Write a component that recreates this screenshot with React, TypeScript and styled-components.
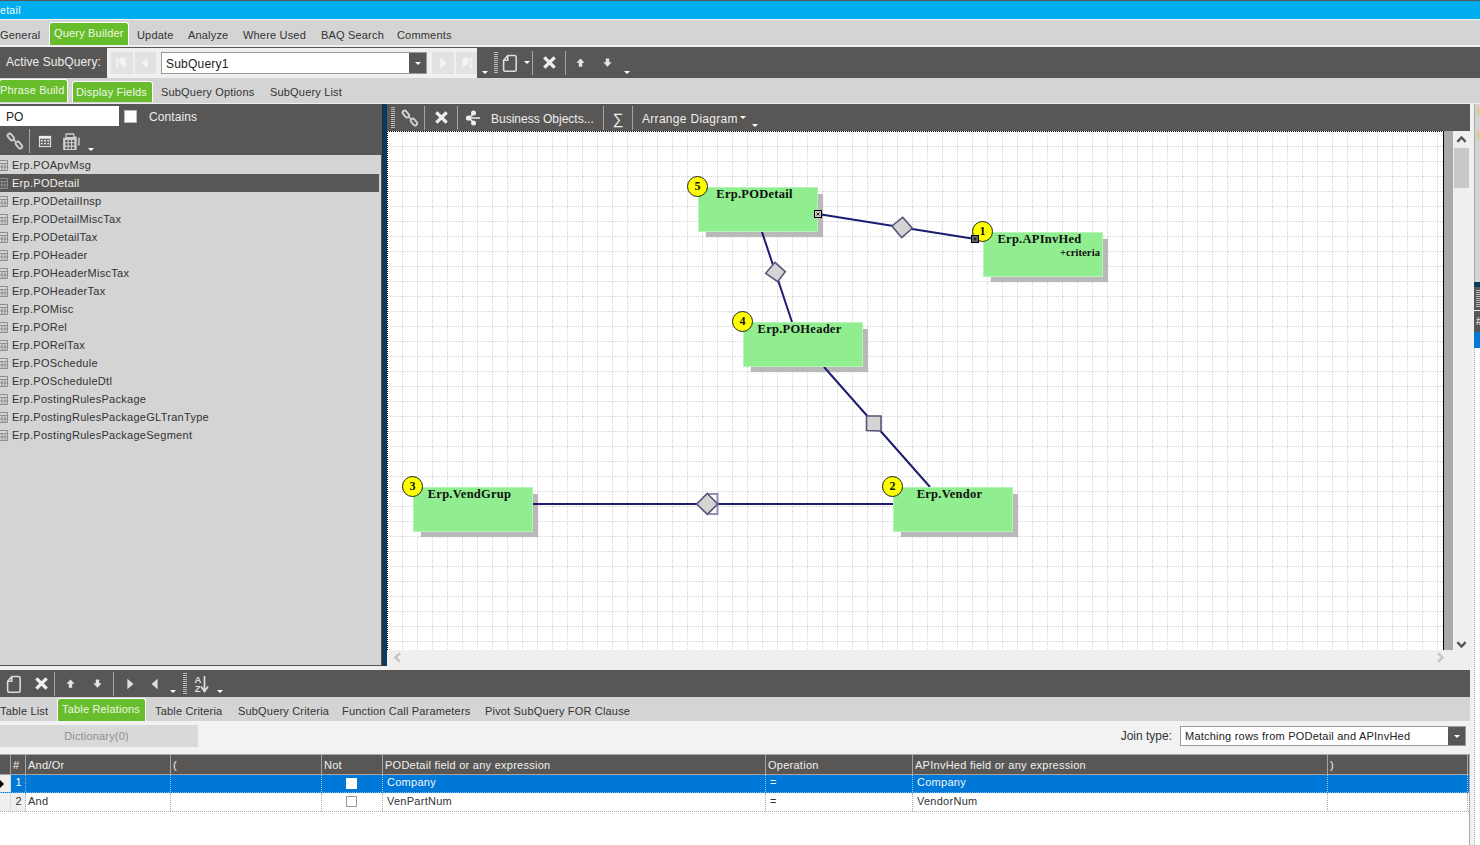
import React from "react";
import styled, { createGlobalStyle } from "styled-components";

const Global = createGlobalStyle`
  html, body { margin: 0; padding: 0; background: #f0f0f0; }
  * { box-sizing: border-box; }
`;

const UI = `"Liberation Sans", Arial, sans-serif`;
const DARK = "#595755";
const GREEN = "#67bd2b";

const Page = styled.div`
  width: 1480px; height: 845px; overflow: hidden; display: flex; flex-direction: column;
  font-family: ${UI}; font-size: 11px; letter-spacing: .18px; color: #333; background: #f0f0f0;
`;
const TopLine = styled.div`height: 1px; background: #555;`;
const TitleBar = styled.div`
  height: 18px; background: #00adef; color: #f2fbff; line-height: 18px; font-size: 10.5px; letter-spacing: .3px;
  margin-bottom: 1px;
`;
const TabRow = styled.div<{ $h: number; $after?: number; $pb?: number }>`
  height: ${p => p.$h}px; margin-bottom: ${p => p.$after ?? 0}px; padding-bottom: ${p => p.$pb ?? 0}px;
  background: #d4d4d4; display: flex; align-items: flex-end; flex: none;
`;
const Tab = styled.div<{ $w: number; $kind?: "raised" | "flat"; $pad?: number; $gap?: number; $ml?: number }>`
  width: ${p => p.$w}px; flex: none; white-space: nowrap; line-height: 20px;
  margin-right: ${p => p.$gap ?? 0}px;
  margin-left: ${p => p.$ml ?? 0}px;
  padding-left: ${p => p.$pad ?? 0}px;
  height: ${p => (p.$kind === "raised" ? 23 : p.$kind === "flat" ? 21 : 20)}px;
  ${p => p.$kind ? `background: ${GREEN}; color: #eef8e4; border: 1px solid #fff; border-bottom: 0; border-radius: 3px 3px 0 0;` : ""}
`;
const Toolbar = styled.div<{ $h: number }>`
  height: ${p => p.$h}px; flex: none; background: ${DARK}; display: flex; align-items: center; color: #eee;
`;
const ToolText = styled.div<{ $w: number; $pad?: number; $sp: number }>`
  width: ${p => p.$w}px; flex: none; white-space: nowrap; font-size: 12px; padding-left: ${p => p.$pad ?? 0}px;
  letter-spacing: ${p => p.$sp}px; padding-top: 2px;
`;
const Sigma = styled.div`
  width: 28px; flex: none; text-align: center; font-size: 15px; letter-spacing: 0; padding-top: 1px;
`;
const BarLabel = styled.div`
  width: 107px; padding-left: 6px; font-size: 12px; letter-spacing: .1px; margin-top: -1px; white-space: nowrap;
`;
const LightSection = styled.div`
  align-self: flex-end; height: 30px; width: 370px; background: #f0f0f0; display: flex; align-items: center; padding: 0 0 0 4px; gap: 2px;
`;
const NavBtn = styled.div`
  width: 22px; height: 22px; background: #e2e2e2; display: flex; align-items: center; justify-content: center; margin-top: 0;
`;
const Combo = styled.div<{ $w: number; $h?: number; $size?: number }>`
  width: ${p => p.$w}px; height: ${p => p.$h ?? 22}px; background: #fff; border: 1px solid #999; display: flex; align-items: stretch; flex: none;
  color: #222; font-size: ${p => p.$size ?? 12}px;
`;
const ComboText = styled.div<{ $pt?: number }>`
  flex: 1; padding: ${p => p.$pt ?? 1}px 0 0 4px; display: flex; align-items: center; white-space: nowrap; letter-spacing: .22px;
`;
const ComboBtn = styled.div`width: 17px; background: ${DARK}; display: flex; align-items: center; justify-content: center;`;
const Caret = styled.span`
  display: inline-block; width: 0; height: 0; border-left: 3px solid transparent; border-right: 3px solid transparent; border-top: 3px solid #fff;
`;
const Slot = styled.div<{ $w: number; $align?: "end" }>`
  width: ${p => p.$w}px; flex: none; height: 100%; display: flex; align-items: ${p => (p.$align === "end" ? "flex-end" : "center")}; justify-content: center;
  padding-bottom: ${p => (p.$align === "end" ? 4 : 0)}px;
  gap: 5px;
`;
const Sep = styled.div`width: 1px; height: 24px; background: #a8a6a4; flex: none;`;
const Grip = styled.div`
  width: 4px; height: 22px; flex: none; margin: 0 1px;
  background: repeating-linear-gradient(to bottom, #bdbbb9 0 1px, transparent 1px 2px);
`;

const Split = styled.div`flex: 1; display: flex; min-height: 0;`;
const MainCol = styled.div`width: 1470px; flex: none; display: flex; flex-direction: column; background: #fff;`;
const Upper = styled.div`height: 566px; flex: none; display: flex; background: #efefef;`;
const Left = styled.div`
  width: 382px; height: 562px; flex: none; display: flex; flex-direction: column; background: #d4d4d4;
  border-right: 1px solid #555; border-bottom: 1px solid #555;
`;
const LeftHead = styled.div`height: 51px; background: ${DARK}; flex: none; display: flex; flex-direction: column; color: #eee;`;
const FilterRow = styled.div`height: 23px; display: flex; align-items: flex-start; padding-top: 2px; flex: none;`;
const FilterInput = styled.div`
  width: 119px; height: 20px; background: #fff; color: #222; font-size: 12px; line-height: 22px; padding-left: 6px; letter-spacing: 0;
`;
const Check = styled.div<{ $light?: boolean }>`
  width: 11px; height: 11px; flex: none; background: #fff; border: 1px solid ${p => (p.$light ? "#fff" : "#9a9a9a")};
`;
const FilterCheck = styled(Check)`width: 13px; height: 13px; margin: 4px 12px 0 5px; border: 1px solid #bbb;`;
const FilterLabel = styled.div`font-size: 12px; line-height: 22px; letter-spacing: .1px;`;
const IconRow = styled.div`flex: 1; display: flex; align-items: center;`;
const List = styled.div`flex: 1; padding: 1px 2px 0 0; overflow: hidden; letter-spacing: .28px;`;
const ListRow = styled.div<{ $sel?: boolean }>`
  height: 18px; display: flex; align-items: center; gap: 4px;
  background: ${p => (p.$sel ? DARK : "transparent")}; color: ${p => (p.$sel ? "#f0f0f0" : "#333")};
`;
const Splitter = styled.div`
  width: 5px; height: 562px; flex: none; background: #0b3a5c; border-left: 1px solid #22303a;
`;
const RightCol = styled.div`flex: 1; display: flex; flex-direction: column; min-width: 0;`;
const CanvasRow = styled.div`height: 519px; flex: none; display: flex;`;
const Canvas = styled.div`
  position: relative; width: 1057px; flex: none; overflow: hidden; background: #fff;
  border-left: 1px dotted #000; border-top: 1px dotted #000; border-right: 1px solid #000;
`;
const Layer = styled.svg`position: absolute; left: 0; top: 0; width: 1055px; height: 518px; display: block;`;
const NodeShadow = styled.div<{ $x: number; $y: number }>`
  position: absolute; left: ${p => p.$x - 388 + 8}px; top: ${p => p.$y - 132 + 7}px; width: 117px; height: 43px;
  background: #b9b9b9; box-shadow: 0 0 1px #c8c8c8;
`;
const Node = styled.div<{ $x: number; $y: number }>`
  position: absolute; left: ${p => p.$x - 388}px; top: ${p => p.$y - 132}px; width: 120px; height: 45px;
  background: #90ee90; border: 1px solid #b4f4b4;
  font-family: "Liberation Serif", "Times New Roman", serif; font-weight: 700; font-size: 12.5px; color: #111; letter-spacing: .25px;
  padding-right: 7px; text-align: center; line-height: 13px;
`;
const NodeTitle = styled.div`white-space: nowrap;`;
const NodeNote = styled.div`font-size: 10.5px; line-height: 14px; text-align: right; margin: 0 -5px 0 0; letter-spacing: .1px;`;
const Badge = styled.div`
  position: absolute; left: -12px; top: -12px; width: 21px; height: 21px; border-radius: 50%;
  background: #ff0; border: 1px solid #222; font-size: 12px; line-height: 18px; text-align: center; letter-spacing: 0; padding: 0;
`;
const GreyBand = styled.div`width: 9px; flex: none; background: #a9a9a9;`;
const VScroll = styled.div`
  flex: 1; background: #efefef; display: flex; flex-direction: column; align-items: center; padding-top: 3px;
`;
const VThumb = styled.div`width: 15px; height: 40px; background: #c9c9c9; margin-top: 3px;`;
const VSpace = styled.div`flex: 1;`;
const HScroll = styled.div`
  height: 20px; flex: none; background: #efefef; display: flex; align-items: flex-start; justify-content: space-between; padding: 2px 24px 0 5px;
`;
const JoinPanel = styled.div`
  height: 33px; flex: none; background: #f2f2f4; display: flex; align-items: center; padding: 0 4px 3px 0;
`;
const Dict = styled.div`
  width: 198px; height: 22px; background: #d9d9d9; color: #8f8f8f; display: flex; align-items: center; justify-content: center; margin-right: auto; padding-right: 5px;
`;
const JoinLabel = styled.div`color: #333; font-size: 12px; letter-spacing: 0; margin-right: 8px;`;
const GridWrap = styled.div`flex: 1; background: #fff; border-right: 1px solid #aaa; display: flex; flex-direction: column; letter-spacing: .26px;`;
const COLS = "11px 15px 145px 151px 61px 383px 147px 415px 140px";
const HeadRow = styled.div`
  height: 21px; display: grid; grid-template-columns: ${COLS}; background: ${DARK}; color: #f0f0f0;
  border-top: 1px solid #a5a5a5; border-bottom: 1px solid #a5a5a5; flex: none;
`;
const HeadCell = styled.div`
  border-right: 1px solid #a5a5a5; padding-left: 2px; line-height: 20px; white-space: nowrap; overflow: hidden;
`;
const DataRow = styled.div<{ $sel?: boolean }>`
  height: ${p => (p.$sel ? 18 : 19)}px; display: grid; grid-template-columns: ${COLS}; flex: none;
  line-height: ${p => (p.$sel ? 15 : 16)}px;
  background: ${p => (p.$sel ? "#0078d7" : "#fff")}; color: ${p => (p.$sel ? "#f2f7fc" : "#333")};
  border-bottom: 1px dotted ${p => (p.$sel ? "#7ab4e6" : "#aaa")};
`;
const Cell = styled.div<{ $pad?: number; $sel?: boolean }>`
  border-right: 1px dotted ${p => (p.$sel ? "#9ccaf0" : "#aaa")}; padding-left: ${p => p.$pad ?? 2}px; white-space: nowrap; position: relative;
`;
const RowHead = styled.div`background: #efefef; display: flex; align-items: center; border-right: 1px solid #ddd;`;
const Triangle = styled.span`width: 0; height: 0; border-left: 4px solid #000; border-top: 4px solid transparent; border-bottom: 4px solid transparent;`;
const NumCell = styled.div<{ $sel?: boolean }>`
  text-align: right; padding-right: 3px; background: ${p => (p.$sel ? "#0078d7" : "#efefef")}; border-right: 1px dotted #aaa;
`;
const CheckCell = styled(Cell)`display: flex; justify-content: center; align-items: center; padding: 0 1px 1px 0;`;
const Strip = styled.div`
  width: 6px; margin-left: 4px; flex: none; display: flex; flex-direction: column;
`;
const StripTop = styled.div`height: 178px; background: #d4d4d4; border-left: 1px solid #aaa; padding-top: 3px;`;
const StripMark = styled.div`width: 4px; height: 8px; background: #d8c9a0; margin: 0 0 16px 1px;`;
const StripNavy = styled.div`height: 5px; background: #0b3a5c;`;
const StripDark = styled.div`height: 23px; background: ${DARK}; padding: 3px 0 0 2px;`;
const StripGrip = styled.div`height: 17px; background: repeating-linear-gradient(to bottom, #bbb 0 1px, transparent 1px 2px);`;
const StripHead = styled.div`height: 21px; margin-top: 1px; background: ${DARK}; color: #fff; font-size: 11px; line-height: 20px; padding-left: 2px; overflow: hidden;`;
const StripBlue = styled.div`height: 16px; background: #0078d7;`;
const StripRest = styled.div`flex: 1; border-left: 1px dotted #aaa; background: #fff;`;

const Svg: React.FC<React.SVGProps<SVGSVGElement> & { s?: number }> = ({ s = 16, children, ...r }) => (
  <svg width={s} height={s} viewBox="0 0 16 16" {...r}>{children}</svg>
);
const LinkI = () => (
  <Svg s={18}>
    <g fill="none" stroke="#cfcfcf" strokeWidth="1.7">
      <rect x="0.9" y="2.6" width="6.8" height="3.6" rx="1.8" transform="rotate(50 4.3 4.4)" />
      <rect x="8.1" y="9.8" width="6.8" height="3.6" rx="1.8" transform="rotate(50 11.5 11.6)" />
      <path d="M6.6 6.8 L9.2 9.2" strokeWidth="1.3" />
    </g>
  </Svg>
);
const XI = () => (
  <Svg s={15}><path d="M2.5 2.5 L13.5 13.5 M13.5 2.5 L2.5 13.5" stroke="#eee" strokeWidth="3.6" fill="none" /></Svg>
);
const Up = ({ down }: { down?: boolean }) => (
  <Svg s={11} transform={down ? "rotate(180)" : undefined}><path d="M8 2 L14 8.5 H10.5 V14 H5.5 V8.5 H2 Z" fill="#e4e4e4" /></Svg>
);
const DocI = () => (
  <Svg s={18}><path d="M6.5 1.5 H13 a1.5 1.5 0 0 1 1.5 1.5 V15 a1.5 1.5 0 0 1 -1.5 1.5 H4 a1.5 1.5 0 0 1 -1.5 -1.5 V6 Z M6.5 1.5 V6 H2.5" transform="scale(.93)" fill="none" stroke="#dcdcdc" strokeWidth="1.5" /></Svg>
);
const TreeI = () => (
  <Svg s={16}>
    <path d="M4 8 L9 3 M4 8 L9 13 M4 8 H15" stroke="#eee" strokeWidth="1.6" fill="none" />
    <circle cx="3.5" cy="8" r="2.6" fill="#eee" /><circle cx="8.5" cy="3" r="2.5" fill="#eee" /><circle cx="8.5" cy="13" r="2.5" fill="#eee" />
  </Svg>
);
const CalI = () => (
  <Svg s={15}>
    <rect x="1" y="2" width="13" height="12" fill="#eee" />
    <rect x="2" y="5" width="11" height="8" fill="#666" />
    <path d="M3 6.5 h2 v1.5 h-2z M6.5 6.5 h2 v1.5 h-2z M10 6.5 h2 v1.5 h-2z M3 9.5 h2 v1.5 h-2z M6.5 9.5 h2 v1.5 h-2z M10 9.5 h2 v1.5 h-2z" fill="#eee" />
  </Svg>
);
const CalcI = () => (
  <Svg s={18}>
    <path d="M3 1 H11 V4 H13 V16 H1 V5 H3 Z" fill="#cfcfcf" />
    <path d="M14 5 H16 V12 H14 Z" fill="#aaa" />
    <path d="M3 7 h2 v2 h-2z M6 7 h2 v2 h-2z M9 7 h2 v2 h-2z M3 10 h2 v2 h-2z M6 10 h2 v2 h-2z M9 10 h2 v2 h-2z M3 13 h2 v2 h-2z M6 13 h2 v2 h-2z M9 13 h2 v2 h-2z M4 2.5 h6 v2 h-6z" fill="#595755" />
  </Svg>
);
const Tri = ({ dir, c = "#f4f4f4", bar }: { dir: "l" | "r"; c?: string; bar?: boolean }) => (
  <Svg s={14} transform={dir === "r" ? "scale(-1 1)" : undefined}>
    <path d={bar ? "M5 2 L12 2 L12 14 L5 8 Z" : "M11 2 V14 L4 8 Z"} fill={c} />
    {bar && <rect x="1.5" y="2" width="2" height="12" fill={c} />}
  </Svg>
);
const SortI = () => (
  <Svg s={20} viewBox="0 0 20 20">
    <text x="4.5" y="9" fontFamily="Liberation Sans" fontWeight="700" fontSize="9.5" fill="#ddd" letterSpacing="0">A</text>
    <text x="4.8" y="18" fontFamily="Liberation Sans" fontWeight="700" fontSize="9.5" fill="#ddd" letterSpacing="0">Z</text>
    <path d="M14.5 2 V17 M11 12.5 L14.5 17.5 L18 12.5" stroke="#ddd" strokeWidth="1.7" fill="none" />
  </Svg>
);
const Chev = ({ rot, c = "#555", s = 11 }: { rot: number; c?: string; s?: number }) => (
  <Svg s={s} transform={`rotate(${rot})`}><path d="M2 11.5 L8 5 L14 11.5" fill="none" stroke={c} strokeWidth="3.4" /></Svg>
);
const TableI = () => (
  <svg width="8" height="11" viewBox="0 0 8 11">
    <path d="M-1 .5 H7.5 V10.5 H-1 M-1 3.5 H7.5 M-1 7 H7.5 M2 3.5 V10.5 M5 3.5 V10.5" fill="none" stroke="#8d8d8d" />
  </svg>
);
const SmallCaret = () => <Caret />;

const Handle = ({ x, y, dark }: { x: number; y: number; dark?: boolean }) => (
  <g transform={`translate(${x - 388 - 4} ${y - 132 - 4})`}>
    <rect x=".5" y=".5" width="7" height="7" fill={dark ? "#666" : "#ccc"} stroke="#000" />
    {dark
      ? <path d="M2.5 4 H5.5 M4 2.5 V5.5" stroke="#111" strokeWidth="1" />
      : <path d="M2.5 2.5 L5.5 5.5 M5.5 2.5 L2.5 5.5" stroke="#222" strokeWidth="1" />}
  </g>
);

const lists = ["POApvMsg","PODetail","PODetailInsp","PODetailMiscTax","PODetailTax","POHeader","POHeaderMiscTax","POHeaderTax","POMisc","PORel","PORelTax","POSchedule","POScheduleDtl","PostingRulesPackage","PostingRulesPackageGLTranType","PostingRulesPackageSegment"];

const ox = (x: number) => x - 388;
const oy = (y: number) => y - 132;
const pts = (a: number[][]) => a.map(([x, y]) => `${ox(x)},${oy(y)}`).join(" ");

const nodes = [
  { n: 5, x: 698, y: 187, t: "Erp.PODetail" },
  { n: 1, x: 983, y: 232, t: "Erp.APInvHed", note: "+criteria" },
  { n: 4, x: 743, y: 322, t: "Erp.POHeader" },
  { n: 3, x: 413, y: 487, t: "Erp.VendGrup" },
  { n: 2, x: 893, y: 487, t: "Erp.Vendor" },
];

const Diagram = () => (
  <Canvas>
    <Layer>
      <defs>
        <pattern id="grid" width="15" height="15" patternUnits="userSpaceOnUse">
          <path d="M14.5 0 V15 M0 14.5 H15" stroke="#d4d4d4" strokeWidth="1" strokeDasharray="1 1" fill="none" />
        </pattern>
      </defs>
      <rect width="1055" height="518" fill="url(#grid)" />
    </Layer>
    {nodes.map(n => <NodeShadow key={n.n} $x={n.x} $y={n.y} />)}
    <Layer>
      <g stroke="#1c1c72" strokeWidth="2" fill="none">
        <polyline points={pts([[818, 214], [975, 239]])} />
        <polyline points={pts([[762, 232], [792, 322]])} />
        <polyline points={pts([[824, 367], [930, 487]])} />
        <polyline points={pts([[533, 504], [893, 504]])} />
      </g>
      <polyline points={pts([[707, 494], [717.5, 494], [717.5, 514], [707, 514]])} fill="none" stroke="#9090b8" strokeWidth="2" />
      <g fill="#d4d4d4" stroke="#54547a" strokeWidth="1.6">
        <polygon points={pts([[902.7, 217.3], [912.3, 228.3], [901.7, 237.7], [892, 226]])} />
        <polygon points={pts([[775, 262.3], [785.3, 271.7], [777.7, 281.7], [765.7, 273.3]])} />
        <polygon points={pts([[866.5, 416], [881, 416], [881, 431], [866.5, 430.5]])} />
        <polygon points={pts([[707.3, 493.5], [717.7, 504], [707.3, 514.3], [696.7, 504]])} />
      </g>
    </Layer>
    {nodes.map(n => (
      <Node key={n.n} $x={n.x} $y={n.y}>
        <Badge>{n.n}</Badge>
        <NodeTitle>{n.t}</NodeTitle>
        {n.note && <NodeNote>{n.note}</NodeNote>}
      </Node>
    ))}
    <Layer>
      <Handle x={818} y={214} />
      <Handle x={975} y={239} dark />
    </Layer>
  </Canvas>
);

export default function App() {
  return (
    <Page>
      <Global />
      <TopLine />
      <TitleBar>etail</TitleBar>
      <TabRow $h={25} $after={2}>
        <Tab $w={49}>General</Tab>
        <Tab $w={80} $kind="raised" $pad={4} $gap={8}>Query Builder</Tab>
        <Tab $w={51}>Update</Tab>
        <Tab $w={55}>Analyze</Tab>
        <Tab $w={78}>Where Used</Tab>
        <Tab $w={76}>BAQ Search</Tab>
        <Tab $w={80}>Comments</Tab>
      </TabRow>
      <Toolbar $h={31}>
        <BarLabel>Active SubQuery:</BarLabel>
        <LightSection>
          <NavBtn><Tri dir="l" bar /></NavBtn>
          <NavBtn><Tri dir="l" /></NavBtn>
          <Slot $w={1} />
          <Combo $w={266}>
            <ComboText>SubQuery1</ComboText>
            <ComboBtn><SmallCaret /></ComboBtn>
          </Combo>
          <Slot $w={1} />
          <NavBtn><Tri dir="r" /></NavBtn>
          <NavBtn><Tri dir="r" bar /></NavBtn>
        </LightSection>
        <Slot $w={16} $align="end"><SmallCaret /></Slot>
        <Grip />
        <Slot $w={33}><DocI /><SmallCaret /></Slot>
        <Sep />
        <Slot $w={32}><XI /></Slot>
        <Sep />
        <Slot $w={29}><Up /></Slot>
        <Slot $w={25}><Up down /></Slot>
        <Slot $w={13} $align="end"><SmallCaret /></Slot>
      </Toolbar>
      <TabRow $h={25} $after={1} $pb={1}>
        <Tab $w={69} $ml={-1} $kind="raised">Phrase Build</Tab>
        <Tab $w={4} />
        <Tab $w={81} $kind="flat" $pad={3} $gap={8}>Display Fields</Tab>
        <Tab $w={109}>SubQuery Options</Tab>
        <Tab $w={90}>SubQuery List</Tab>
      </TabRow>
      <Split>
        <MainCol>
          <Upper>
            <Left>
              <LeftHead>
                <FilterRow>
                  <FilterInput>PO</FilterInput>
                  <FilterCheck />
                  <FilterLabel>Contains</FilterLabel>
                </FilterRow>
                <IconRow>
                  <Slot $w={29}><LinkI /></Slot>
                  <Sep />
                  <Slot $w={31}><CalI /></Slot>
                  <Slot $w={20}><CalcI /></Slot>
                  <Slot $w={20} $align="end"><SmallCaret /></Slot>
                </IconRow>
              </LeftHead>
              <List>
                {lists.map((l, i) => (
                  <ListRow key={l} $sel={i === 1}><TableI />Erp.{l}</ListRow>
                ))}
              </List>
            </Left>
            <Splitter />
            <RightCol>
              <Toolbar $h={27}>
                <Slot $w={3} />
                <Grip />
                <Slot $w={28}><LinkI /></Slot>
                <Sep />
                <Slot $w={32}><XI /></Slot>
                <Sep />
                <Slot $w={29}><TreeI /></Slot>
                <ToolText $w={116} $pad={4} $sp={0}>Business Objects...</ToolText>
                <Sep />
                <Sigma>∑</Sigma>
                <Sep />
                <Slot $w={9} />
                <ToolText $w={99} $sp={.3}>Arrange Diagram</ToolText>
                <Slot $w={3}><SmallCaret /></Slot>
                <Slot $w={22} $align="end"><SmallCaret /></Slot>
              </Toolbar>
              <CanvasRow>
                <Diagram />
                <GreyBand />
                <VScroll>
                  <Chev rot={0} />
                  <VThumb />
                  <VSpace />
                  <Chev rot={180} />
                </VScroll>
              </CanvasRow>
              <HScroll>
                <Chev rot={-90} c="#c4c4c4" />
                <Chev rot={90} c="#c4c4c4" />
              </HScroll>
            </RightCol>
          </Upper>
          <Toolbar $h={27}>
            <Slot $w={28}><DocI /></Slot>
            <Slot $w={26}><XI /></Slot>
            <Sep />
            <Slot $w={30}><Up /></Slot>
            <Slot $w={25}><Up down /></Slot>
            <Slot $w={3} />
            <Sep />
            <Slot $w={32}><Tri dir="r" c="#ddd" /></Slot>
            <Slot $w={18}><Tri dir="l" c="#ddd" /></Slot>
            <Slot $w={18} $align="end"><SmallCaret /></Slot>
            <Grip />
            <Slot $w={24}><SortI /></Slot>
            <Slot $w={16} $align="end"><SmallCaret /></Slot>
          </Toolbar>
          <TabRow $h={24}>
            <Tab $w={57}>Table List</Tab>
            <Tab $w={89} $kind="raised" $pad={4} $gap={9}>Table Relations</Tab>
            <Tab $w={83}>Table Criteria</Tab>
            <Tab $w={104}>SubQuery Criteria</Tab>
            <Tab $w={143}>Function Call Parameters</Tab>
            <Tab $w={160}>Pivot SubQuery FOR Clause</Tab>
          </TabRow>
          <JoinPanel>
            <Dict>Dictionary(0)</Dict>
            <JoinLabel>Join type:</JoinLabel>
            <Combo $w={286} $h={20} $size={11}>
              <ComboText $pt={0}>Matching rows from PODetail and APInvHed</ComboText>
              <ComboBtn><SmallCaret /></ComboBtn>
            </Combo>
          </JoinPanel>
          <GridWrap>
            <HeadRow>
              <HeadCell />
              <HeadCell>#</HeadCell>
              <HeadCell>And/Or</HeadCell>
              <HeadCell>(</HeadCell>
              <HeadCell>Not</HeadCell>
              <HeadCell>PODetail field or any expression</HeadCell>
              <HeadCell>Operation</HeadCell>
              <HeadCell>APInvHed field or any expression</HeadCell>
              <HeadCell>)</HeadCell>
            </HeadRow>
            <DataRow $sel>
              <RowHead><Triangle /></RowHead>
              <NumCell $sel>1</NumCell>
              <Cell $sel />
              <Cell $sel />
              <CheckCell $sel><Check $light /></CheckCell>
              <Cell $sel $pad={4}>Company</Cell>
              <Cell $sel $pad={4}>=</Cell>
              <Cell $sel $pad={4}>Company</Cell>
              <Cell $sel />
            </DataRow>
            <DataRow>
              <RowHead />
              <NumCell>2</NumCell>
              <Cell>And</Cell>
              <Cell />
              <CheckCell><Check /></CheckCell>
              <Cell $pad={4}>VenPartNum</Cell>
              <Cell $pad={4}>=</Cell>
              <Cell $pad={4}>VendorNum</Cell>
              <Cell />
            </DataRow>
          </GridWrap>
        </MainCol>
        <Strip>
          <StripTop><StripMark /><StripMark /></StripTop>
          <StripNavy />
          <StripDark><StripGrip /></StripDark>
          <StripHead>#</StripHead>
          <StripBlue />
          <StripRest />
        </Strip>
      </Split>
    </Page>
  );
}
